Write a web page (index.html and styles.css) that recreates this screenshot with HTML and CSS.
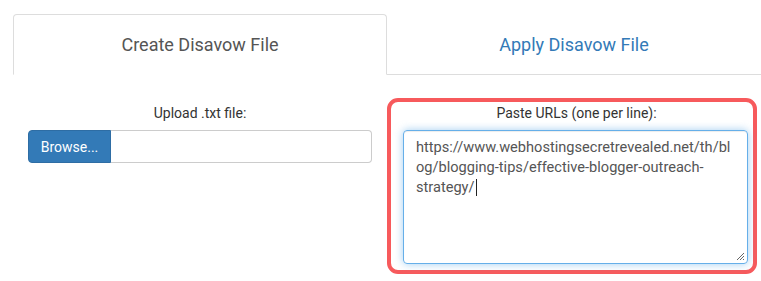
FILE: index.html
```html
<!DOCTYPE html>
<html>
<head>
<meta charset="utf-8">
<link rel="stylesheet" href="styles.css">
</head>
<body>
<div class="page">
  <ul class="tabs">
    <li class="tab active">Create Disavow File</li>
    <li class="tab link">Apply Disavow File</li>
  </ul>
  <div class="panes">
    <div class="col left">
      <div class="label">Upload .txt file:</div>
      <div class="input-group">
        <span class="browse">Browse...</span>
        <span class="file-field"></span>
      </div>
    </div>
    <div class="col right">
      <div class="highlight">
        <div class="label">Paste URLs (one per line):</div>
        <div class="textarea">
          <span class="line">https://www.webhostingsecretrevealed.net/th/bl</span>
          <span class="line">og/blogging-tips/effective-blogger-outreach-</span>
          <span class="line">strategy/<span class="caret"></span></span>
          <svg class="grip" width="9" height="9" viewBox="0 0 9 9"><path d="M8 1 L1 8 M8 4 L4 8 M8 7 L7 8" stroke="#666" stroke-width="1" fill="none"/></svg>
        </div>
      </div>
    </div>
  </div>
</div>
</body>
</html>
```

FILE: styles.css
```css
html, body {
  margin: 0;
  padding: 0;
  background: #fff;
}
body {
  font-family: "Roboto", "Liberation Sans", sans-serif;
  color: #333;
}
.page {
  padding: 14px 0 0 13px;
  width: 748px;
}
.tabs {
  list-style: none;
  margin: 0;
  padding: 0;
  display: flex;
  border-bottom: 1px solid #ddd;
}
.tab {
  flex: 1;
  height: 60px;
  display: flex;
  align-items: center;
  justify-content: center;
  font-size: 18px;
  box-sizing: border-box;
  margin-bottom: -1px;
  border: 1px solid transparent;
  border-radius: 4px 4px 0 0;
}
.tab.active {
  color: #555;
  border-color: #ddd;
  border-bottom-color: #fff;
  background: #fff;
  height: 61px;
}
.tab.link {
  color: #337ab7;
}
.panes {
  display: flex;
}
.col {
  width: 374px;
  box-sizing: border-box;
}
.left {
  padding: 28px 15px 0 15px;
}
.label {
  font-size: 14px;
  line-height: 20px;
  text-align: center;
  color: #333;
}
.left .input-group {
  margin-top: 7px;
  display: flex;
  height: 33px;
}
.browse {
  width: 83px;
  background: #337ab7;
  color: #fff;
  font-size: 14px;
  display: flex;
  align-items: center;
  justify-content: center;
  border-radius: 4px 0 0 4px;
  border: 1px solid #2e6da4;
  box-sizing: border-box;
}
.file-field {
  flex: 1;
  border: 1px solid #ccc;
  border-left: 0;
  border-radius: 0 4px 4px 0;
}
.right {
  padding-top: 23px;
}
.highlight {
  width: 370px;
  height: 176px;
  box-sizing: border-box;
  border: 4px solid #f75a5c;
  border-radius: 11px;
  padding: 1px 5px 0 12px;
}
.highlight .label {
  padding-left: 2px;
}
.textarea {
  position: relative;
  margin-top: 7px;
  width: 345px;
  height: 134px;
  box-sizing: border-box;
  border: 1px solid #66afe9;
  border-radius: 4px;
  box-shadow: inset 0 1px 1px rgba(0,0,0,.075), 0 0 8px rgba(102,175,233,.6);
  padding: 6px 12px;
  font-size: 14.6px;
  line-height: 20px;
  color: #555;
}
.line {
  display: block;
  white-space: pre;
}
.caret {
  display: inline-block;
  width: 1px;
  height: 17px;
  background: #222;
  vertical-align: -4px;
  margin-left: 1px;
}
.grip {
  position: absolute;
  right: 2px;
  bottom: 2px;
}
```
